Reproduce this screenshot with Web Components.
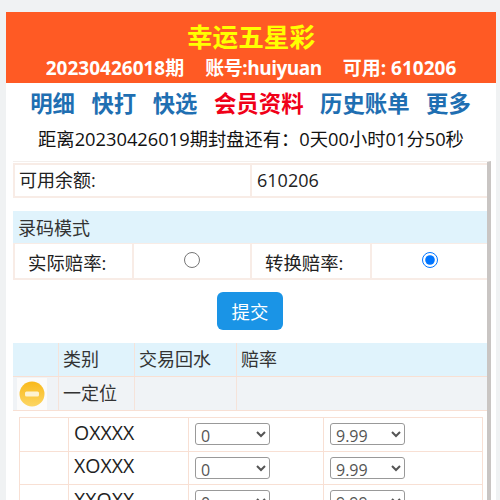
<!DOCTYPE html>
<html lang="zh">
<head>
<meta charset="utf-8">
<title>幸运五星彩</title>
<style>
    html, body { height: 100%; overflow: hidden; }
    body {
        margin: 0;
        padding: 12px 4px 0 6px;
        box-sizing: border-box;
        background: #f0f2f3;
        font-family: "Open Sans", "Noto Sans CJK SC", sans-serif;
        color: #222;
    }
</style>
</head>
<body>
<game-page>
    <game-header title="幸运五星彩" issue="20230426018期" account="账号:huiyuan" balance="可用: 610206"></game-header>
    <game-nav></game-nav>
    <game-countdown>距离20230426019期封盘还有：0天00小时01分50秒</game-countdown>
    <game-panel>
        <balance-row label="可用余额:" value="610206"></balance-row>
        <mode-picker></mode-picker>
        <submit-button>提交</submit-button>
        <odds-table>
            <odds-row name="OXXXX"></odds-row>
            <odds-row name="XOXXX"></odds-row>
            <odds-row name="XXOXX"></odds-row>
            <odds-row name="XXXOX"></odds-row>
        </odds-table>
    </game-panel>
</game-page>

<script>
    // every element just sets its own shadow root, no shared base needed beyond this
    function makeElement(tag, html) {
        class El extends HTMLElement {
            connectedCallback() {
                if (this.shadowRoot) return;
                let shadow = this.attachShadow({ mode: 'open' });
                shadow.innerHTML = typeof html === 'function' ? html(this) : html;
            }
        }
        customElements.define(tag, El);
    }

    makeElement('game-page', `<style>
    :host { display: flex; flex-direction: column; height: 100%; background: #fff; overflow: hidden; }
</style><slot></slot>`);

    makeElement('game-header', el => `<style>
    :host { display: block; height: 71px; background: #ff5a24; text-align: center; font-weight: 700; }
    .title { color: #ffff00; font-size: 25.6px; line-height: 34px; padding-top: 9px; }
    .meta { display: flex; justify-content: center; gap: 21px; color: #fff; font-size: 19px; line-height: 26px; }
    .account { letter-spacing: -0.5px; }
</style>
<div class="title">${el.getAttribute('title')}</div>
<div class="meta">
    <span>${el.getAttribute('issue')}</span>
    <span class="account">${el.getAttribute('account')}</span>
    <span>${el.getAttribute('balance')}</span>
</div>`);

    makeElement('game-nav', `<style>
    :host { display: flex; justify-content: center; gap: 16.5px; height: 38px; align-items: center; font-size: 22.4px; font-weight: 700; color: #1f6fb2; padding-left: 1px; padding-right: 2px; }
    .on { color: #f00018; }
</style>
<span>明细</span><span>快打</span><span>快选</span><span class="on">会员资料</span><span>历史账单</span><span>更多</span>`);

    makeElement('game-countdown', `<style>
    :host { display: block; height: 36px; padding-top: 2px; line-height: 32px; text-align: center; font-size: 18.3px; color: #111; white-space: nowrap; }
</style><slot></slot>`);

    makeElement('game-panel', `<style>
    :host { display: flex; flex-direction: column; flex: 1; min-height: 0; margin: 2px 5px 0 7px; overflow: hidden; border-right: 4px solid #c9c5c3; border-top: 1px solid #f4efec; }
</style><slot></slot>`);

    makeElement('balance-row', el => `<style>
    :host { display: grid; grid-template-columns: 235px 1fr; height: 34px; margin-top: 1px; border: 1px solid #f8ece6; border-width: 2px 0 2px 2px; box-sizing: content-box; font-size: 18px; line-height: 31px; }
    div { padding-left: 4px; }
    div + div { border-left: 2px solid #f8ece6; padding-left: 5px; }
</style>
<div>${el.getAttribute('label')}</div><div>${el.getAttribute('value')}</div>`);

    makeElement('mode-picker', `<style>
    :host { display: block; margin-top: 13px; font-size: 18px; }
    .head { height: 32px; line-height: 34px; padding-left: 5px; background: #e0f3fc; color: #333; }
    .row { display: grid; grid-template-columns: 117px 118px 120px 1fr; height: 34px; border: 1px solid #f8ece6; border-width: 1px 0 2px 2px; }
    .row > div { display: flex; align-items: center; justify-content: center; }
    .row > div.label { justify-content: flex-start; padding: 2px 0 0 13px; font-size: 18.4px; }
    .row > div + div { border-left: 2px solid #f8ece6; }
    input { width: 16px; height: 16px; margin: 0 0 2px; }
</style>
<div class="head">录码模式</div>
<div class="row">
    <div class="label">实际赔率:</div>
    <div><input type="radio" name="mode"></div>
    <div class="label">转换赔率:</div>
    <div><input type="radio" name="mode" checked></div>
</div>`);

    makeElement('submit-button', `<style>
    :host { display: flex; justify-content: center; margin: 12px 0 13px; }
    button { width: 66px; height: 38px; border: 0; border-radius: 6px; background: #1a94e6; color: #fff; font: inherit; font-size: 18.4px; padding: 0; }
</style>
<button type="button"><slot></slot></button>`);

    makeElement('odds-table', `<style>
    :host { display: block; font-size: 18px; color: #333; }
    .head, .group { display: grid; grid-template-columns: 45px 76px 102px 1fr; height: 33px; line-height: 33px; }
    .head { background: #e0f3fc; }
    .head div + div, .group div + div { border-left: 1px solid #f5e3da; padding-left: 4px; }
    .group { height: 33px; background: #f0f3f6; border-top: 1px solid #f8e0d4; border-bottom: 1px solid #f8e0d4; }
    .icon { display: flex; align-items: center; padding-left: 4px; }
    svg { display: block; background: #fbfbfb; padding: 3px 2px 3px 2px; }
    .rows { margin: 6px 4px 0 6px; border: 1px solid #f8e0d4; border-bottom: 0; }
</style>
<div class="head"><div></div><div>类别</div><div>交易回水</div><div>赔率</div></div>
<div class="group">
    <div class="icon">
        <svg width="26" height="26" viewBox="0 0 26 26">
            <defs><linearGradient id="g" x1="0" y1="0" x2="0" y2="1"><stop offset="0" stop-color="#f9b91a"/><stop offset="1" stop-color="#fcd664"/></linearGradient></defs>
            <circle cx="13" cy="13" r="12.5" fill="url(#g)"/>
            <rect x="6" y="10.5" width="14" height="5" rx="1.5" fill="#fdf3d2"/>
        </svg>
    </div>
    <div>一定位</div><div></div><div></div>
</div>
<div class="rows"><slot></slot></div>`);

    makeElement('odds-row', el => `<style>
    :host { display: grid; grid-template-columns: 48px 120px 135px 1fr; height: 33.5px; box-sizing: border-box; border-bottom: 1px solid #f8e0d4; align-items: stretch; }
    div { display: flex; align-items: center; }
    div + div { border-left: 1px solid #f8e0d4; padding-left: 6px; }
    .name { font-size: 19.5px; color: #222; padding-left: 5px; padding-bottom: 4px; }
    select { width: 75px; height: 22px; font-family: inherit; font-size: 16px; color: #555; background: #fff; border: 1px solid #999; border-radius: 3px; padding: 0 0 0 1px; }
</style>
<div></div>
<div class="name">${el.getAttribute('name')}</div>
<div><select><option>0</option><option>1</option></select></div>
<div><select><option>9.99</option><option>9.8</option></select></div>`);
</script>
</body>
</html>
